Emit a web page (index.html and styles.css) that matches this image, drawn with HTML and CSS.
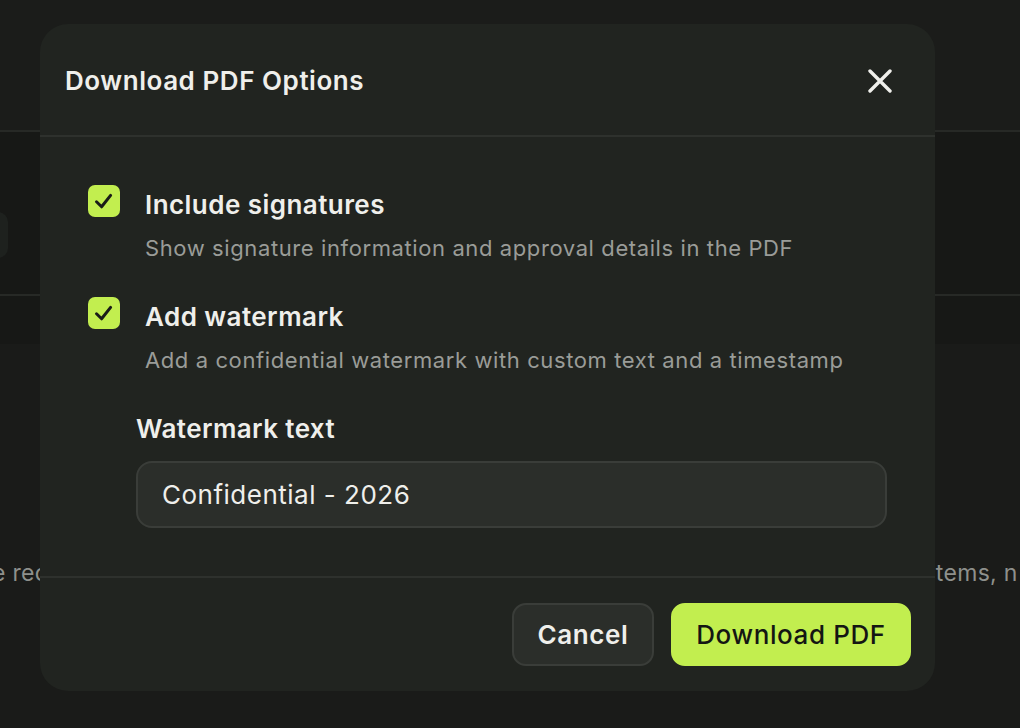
FILE: index.html
```html
<!DOCTYPE html>
<html lang="en">
<head>
	<meta charset="UTF-8">
	<title>Download PDF Options</title>
<link rel="stylesheet" href="styles.css">
</head>
<body>

<div class="page">
	<div class="topbar"></div>
	<div class="toolbar">
		<span class="search"></span>
	</div>
	<div class="tabs"></div>
	<div class="content">
		<p class="note"><span class="note-left">e rec</span><span class="note-right">items, n</span></p>
	</div>
</div>

<div class="modal">
	<div class="modal-head">
		<h2 class="modal-title">Download PDF Options</h2>
		<a href="javascript:;" class="modal-close">
			<svg width="24" height="24" viewBox="0 0 24 24"><path d="M2 2L22 22M22 2L2 22" stroke="#efefeb" stroke-width="3.4" stroke-linecap="round"/></svg>
		</a>
	</div>
	<div class="modal-body">
		<div class="option">
			<span class="check"><svg width="32" height="32" viewBox="0 0 32 32"><path d="M8.5 16.8L13.6 21.8L22.6 10.4" fill="none" stroke="#1a1c18" stroke-width="3" stroke-linecap="round" stroke-linejoin="round"/></svg></span>
			<div class="option-text">
				<div class="option-label">Include signatures</div>
				<div class="option-desc">Show signature information and approval details in the PDF</div>
			</div>
		</div>
		<div class="option">
			<span class="check"><svg width="32" height="32" viewBox="0 0 32 32"><path d="M8.5 16.8L13.6 21.8L22.6 10.4" fill="none" stroke="#1a1c18" stroke-width="3" stroke-linecap="round" stroke-linejoin="round"/></svg></span>
			<div class="option-text">
				<div class="option-label">Add watermark</div>
				<div class="option-desc">Add a confidential watermark with custom text and a timestamp</div>
			</div>
		</div>
		<div class="field">
			<label class="field-label">Watermark text</label>
			<div class="field-input">Confidential - 2026</div>
		</div>
	</div>
	<div class="modal-foot">
		<a href="javascript:;" class="btn btn-cancel">Cancel</a>
		<a href="javascript:;" class="btn btn-primary">Download PDF</a>
	</div>
</div>

</body>
</html>
```
FILE: styles.css
```css
*{margin:0;padding:0;box-sizing:border-box;}
html,body{height:100%;}
body{background:#1a1b19;font-family:Inter,"Noto Sans",sans-serif;color:#efefeb;overflow:hidden;}

/* page behind the dialog */
.page{display:flex;flex-direction:column;height:728px;}
.topbar{height:132px;background:#1b1c1a;border-bottom:2px solid #272926;}
.toolbar{height:164px;background:#171816;border-bottom:2px solid #272926;display:flex;align-items:center;padding-top:44px;}
.toolbar .search{display:block;width:20px;height:46px;margin-left:-12px;border-radius:10px;background:#1e211e;}
.tabs{height:48px;background:#171816;}
.content{flex:1;background:#1a1b19;padding-top:214px;}
.note{display:flex;justify-content:space-between;font-size:23px;line-height:30px;letter-spacing:0.3px;color:#8e908c;white-space:nowrap;}
.note-left{margin-left:-8px;}
.note-right{width:90px;overflow:hidden;margin-left:auto;}

/* dialog */
.modal{position:absolute;left:40px;top:24px;width:895px;height:667px;background:#212420;border-radius:28px;display:flex;flex-direction:column;}
.modal-head{height:113px;display:flex;align-items:center;justify-content:space-between;padding:0 43px 0 25px;border-bottom:2px solid #2e312d;}
.modal-title{font-size:26px;font-weight:600;letter-spacing:0.55px;color:#efefeb;margin-top:2px;}
.modal-close{display:block;width:24px;height:24px;margin-top:2px;}
.modal-close svg{display:block;}

.modal-body{flex:1;padding:48px 48px 0 48px;border-bottom:2px solid #2e312d;}
.option{display:flex;gap:25px;margin-bottom:34px;}
.check{flex:none;width:32px;height:32px;border-radius:7px;background:#c2ee4f;}
.check svg{display:block;}
.option-label{font-size:26px;font-weight:600;line-height:40px;letter-spacing:0.45px;color:#efefeb;}
.option-desc{font-size:22px;line-height:30px;margin-top:8px;letter-spacing:0.6px;color:#9a9c98;}

.field{margin-left:48px;}
.field-label{display:block;font-size:26px;font-weight:600;line-height:40px;letter-spacing:0.4px;color:#efefeb;}
.field-input{margin-top:12px;height:67px;border:2px solid #3a3d39;border-radius:16px;background:#2b2e2a;padding:0 24px;font-size:26px;line-height:63px;letter-spacing:0.5px;color:#efefeb;}

.modal-foot{height:113px;display:flex;justify-content:flex-end;align-items:flex-start;gap:17px;padding:25px 24px 0 0;}
.btn{display:block;height:63px;line-height:59px;border-radius:14px;font-size:26px;font-weight:500;letter-spacing:0.6px;text-decoration:none;text-align:center;}
.btn-cancel{width:142px;background:#2b2e2a;border:2px solid #3a3d39;color:#efefeb;font-weight:600;}
.btn-primary{width:240px;background:#c2ee4f;border:2px solid #c2ee4f;color:#141613;}
```
